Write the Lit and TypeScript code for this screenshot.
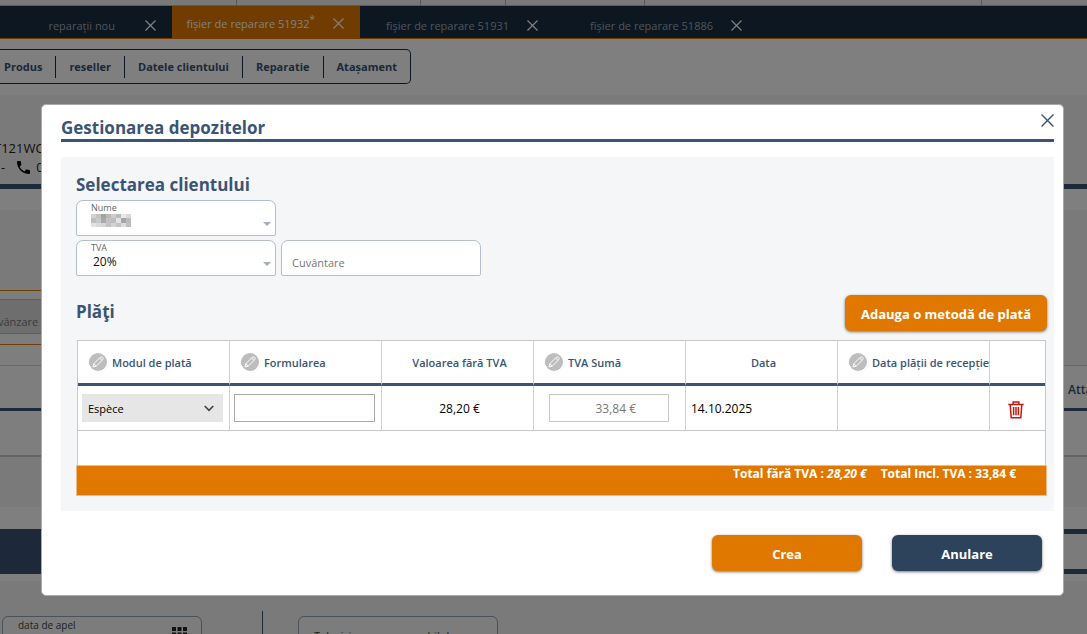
import { LitElement, html, css } from "lit";
import { customElement } from "lit/decorators.js";

const cross = html`<svg class="x" viewBox="0 0 12 12" aria-hidden="true">
  <path d="M0.5 0.5 L11.5 11.5 M11.5 0.5 L0.5 11.5" fill="none" stroke="currentColor" stroke-width="1.3" />
</svg>`;

const pencil = html`<svg class="pencil" viewBox="0 0 18 18" aria-hidden="true">
  <circle cx="9" cy="9" r="9" fill="#bdbdbd" />
  <g fill="none" stroke="#fff" stroke-width="1" stroke-linejoin="round">
    <path d="M4 14 L4.8 10.8 L11.3 4.3 Q12.5 3.3 13.6 4.4 Q14.7 5.5 13.7 6.7 L7.2 13.2 Z" />
    <path d="M4.8 10.8 L7.2 13.2 M10.6 5 L13 7.4" />
  </g>
</svg>`;

const trash = html`<svg class="trash" viewBox="0 0 16 18" aria-hidden="true">
  <g fill="none" stroke="#c0190f" stroke-width="1.5">
    <path d="M0.3 3.4 H15.7 M5.2 3.2 V1 H10.8 V3.2 M2.2 3.6 L3.2 16.8 H12.8 L13.8 3.6" />
    <path d="M5.6 6 V14.2 M8 6 V14.2 M10.4 6 V14.2" />
  </g>
</svg>`;

const chevron = html`<svg class="chevron" viewBox="0 0 10 7" aria-hidden="true">
  <path d="M0.7 1 L5 5.3 L9.3 1" fill="none" stroke="#444" stroke-width="1.7" />
</svg>`;

const caret = html`<svg class="caret" viewBox="0 0 8 4" aria-hidden="true"><path d="M0 0 H8 L4 4 Z" fill="#a3adbb" /></svg>`;

const mosaicShades = [
  "#d2d2d2", "#c2c2c2", "#a2a2a2", "#b8b8b8", "#cccccc", "#bababa", "#e9e9e9", "#d9d9d9",
  "#bebebe", "#c9c9c9", "#a9a9a9", "#c2c2c2", "#bdbdbd", "#e2e2e2", "#a5a5a5", "#bbbbbb",
  "#e2e2e2", "#dadada", "#d6d6d6", "#c3c3c3", "#d4d4d4", "#c4c4c4", "#dcdcdc", "#c0c0c0",
];
const mosaic = html`<div class="mosaic" aria-hidden="true">${mosaicShades.map((c) => html`<i style="background:${c}"></i>`)}</div>`;

@customElement("page-backdrop")
class PageBackdrop extends LitElement {
  static styles = css`
    :host { display: flex; flex-direction: column; height: 100%; overflow: hidden; background: #fff; color: #3a5170; }
    .strip { display: flex; height: 5px; flex: none; background: #f3f3f3; border-bottom: 1px solid #b8b8b8; }
    .strip span { border-right: 1px solid #b0b0b0; box-sizing: border-box; }
    .c1 { width: 237px; }
    .c2 { width: 184px; }
    .c3 { width: 85px; }
    .c4 { width: 139px; }
    .c5 { width: 337px; }
    .tabs { display: flex; flex: none; height: 32px; background: #182e44; border-bottom: 1px solid #e07800; }
    .tab { display: flex; align-items: center; justify-content: flex-end; box-sizing: border-box; padding: 6px 16px 0 0; gap: 18px; font-size: 11px; color: #a0a8b0; white-space: nowrap; }
    .tab button { border: 0; padding: 0; background: none; color: #fff; display: flex; }
    .first { width: 172px; gap: 30px; }
    .active { width: 188px; background: #e07800; color: #fff; padding-top: 2px; }
    .active sup { font-size: 10px; line-height: 0; }
    .open { width: 194px; }
    .last { width: 204px; }
    .x { width: 11px; height: 11px; }
    .nav { display: flex; flex: none; align-self: flex-start; align-items: center; height: 33px; margin: 10px 0 11px; border: 1px solid #1a2e48; border-left: 0; border-radius: 0 5px 5px 0; font-size: 11px; font-weight: 700; }
    .nav a { color: inherit; text-decoration: none; padding: 0 13px; line-height: 22px; border-right: 1px solid #1a2e48; }
    .nav a:first-child { padding-left: 4px; }
    .nav a:last-child { border: 0; }
    .info { flex: none; height: 94px; box-sizing: border-box; padding-top: 44px; background: #f4f4f4; border-bottom: 5px solid #3a5170; font-size: 13px; line-height: 19px; color: #222; }
    .info div { display: flex; align-items: center; gap: 12px; padding-left: 1px; }
    .info .serial { margin-left: -6px; padding: 0; font-weight: 500; }
    .tel { display: flex; align-items: center; gap: 6px; }
    .phone { width: 13px; height: 13px; }
    .gap { flex: none; height: 21px; }
    .cols { display: flex; justify-content: space-between; flex: none; height: 297px; background: #f4f4f4; }
    .left { width: 50px; }
    .right { width: 23px; overflow: hidden; }
    .sale { margin-top: 80px; height: 35px; padding: 8px 0 10px; border: solid #e07800; border-width: 1px 0; background: #fafafa; }
    .sale span { display: block; height: 33px; line-height: 44px; overflow: hidden; background: #dcdcdc; border: solid #b8bec8; border-width: 1px 0; color: #777; white-space: nowrap; font-size: 11px; text-indent: -2px; }
    .blank { height: 20px; background: #fcfcfc; border-bottom: 1px solid #d0d0d0; }
    .row { height: 42px; border-bottom: 3px solid #3a5170; background: #fcfcfc; }
    .rest { height: 44px; border-bottom: 2px solid #c8c8c8; background: #fcfcfc; }
    .right .row { margin-top: 155px; border-top: 1px solid #d0d0d0; line-height: 48px; padding-left: 4px; font-size: 12px; font-weight: 600; }
    .band { display: flex; flex: none; height: 45px; padding: 22px 0 7px; }
    .solid { width: 50%; background: #3a5170; }
    .lined { width: 50%; box-sizing: border-box; border: solid #3a5170; border-width: 5px 0; background: #f7f7f7; }
    .lower { flex: 1; display: flex; align-items: flex-start; background: #f4f4f4; padding: 30px 0 0 2px; }
    .field { width: 200px; height: 50px; box-sizing: border-box; flex: none; border: 1px solid #94a2b6; border-radius: 6px; background: #f8f8f8; display: flex; justify-content: space-between; padding: 0 14px 0 15px; font-size: 10px; line-height: 16px; color: #444; margin-top: 5px; white-space: nowrap; }
    .grid { width: 15px; height: 15px; margin-top: 10px; }
    .rule { flex: none; width: 1px; height: 60px; margin: 0 35px 0 60px; background: #3a5170; }
    .tv { line-height: 38px; font-size: 11px; }
  `;
  render() {
    return html`
      <div class="strip"><span class="c1"></span><span class="c2"></span><span class="c3"></span><span class="c4"></span><span class="c5"></span></div>
      <div class="tabs">
        <div class="tab first"><span>reparații nou</span><button aria-label="Închide">${cross}</button></div>
        <div class="tab active"><span>fișier de reparare 51932<sup>*</sup></span><button aria-label="Închide">${cross}</button></div>
        <div class="tab open"><span>fișier de reparare 51931</span><button aria-label="Închide">${cross}</button></div>
        <div class="tab last"><span>fișier de reparare 51886</span><button aria-label="Închide">${cross}</button></div>
      </div>
      <nav class="nav"><a href="#">Produs</a><a href="#">reseller</a><a href="#">Datele clientului</a><a href="#">Reparatie</a><a href="#">Atașament</a></nav>
      <div class="info">
        <div class="serial">T121WC</div>
        <div>-<span class="tel"><svg class="phone" viewBox="3 3 18 18" aria-hidden="true"><path fill="#000" d="M6.62 10.79c1.44 2.83 3.76 5.14 6.59 6.59l2.2-2.2c.27-.27.67-.36 1.02-.24 1.12.37 2.33.57 3.57.57.55 0 1 .45 1 1V20c0 .55-.45 1-1 1-9.39 0-17-7.61-17-17 0-.55.45-1 1-1h3.5c.55 0 1 .45 1 1 0 1.25.2 2.45.57 3.57.11.35.03.74-.25 1.02l-2.2 2.2z"/></svg>0</span></div>
      </div>
      <div class="gap"></div>
      <div class="cols">
        <div class="left"><div class="sale"><span>vânzare</span></div><div class="blank"></div><div class="row"></div><div class="rest"></div></div>
        <div class="right"><div class="row">Atta</div><div class="rest"></div></div>
      </div>
      <div class="band"><div class="solid"></div><div class="lined"></div></div>
      <div class="lower">
        <div class="field"><span>data de apel</span>
          <svg class="grid" viewBox="0 0 15 15" aria-hidden="true"><path fill="#222" d="M0 0h4v4H0z M5.5 0h4v4h-4z M11 0h4v4h-4z M0 5.5h4v4H0z M5.5 5.5h4v4h-4z M11 5.5h4v4h-4z M0 11h4v4H0z M5.5 11h4v4h-4z M11 11h4v4h-4z"/></svg>
        </div>
        <div class="rule"></div>
        <div class="field"><span class="tv">Televiziunea responsabilul</span></div>
      </div>`;
  }
}

@customElement("deposit-dialog")
class DepositDialog extends LitElement {
  static styles = css`
    :host { display: block; box-sizing: border-box; background: #fff; border: 1px solid #aaa; border-radius: 5px; padding: 4px 9px 24px 19px; color: #3a5475; }
    h2, h3 { margin: 0; font-size: 17px; font-weight: 700; line-height: 24px; }
    header { display: flex; justify-content: space-between; border-bottom: 3px solid #3a5475; height: 30px; }
    header h2 { padding-top: 7px; line-height: 23px; }
    .close { border: 0; padding: 0; background: none; color: #3a5475; width: 13px; height: 13px; margin-top: 5px; }
    .x { display: block; width: 13px; height: 13px; }
    .panel { margin-top: 15px; padding: 16px 7px 15px 15px; background: #f5f6f8; }
    .fields { display: grid; grid-template-columns: 200px 200px; gap: 4px 5px; margin-top: 3px; }
    .field { position: relative; display: flex; flex-direction: column; height: 36px; box-sizing: border-box; border: 1px solid #b4bfce; border-radius: 7px 7px 2px 2px; background: #fff; }
    .field label { font-size: 9px; line-height: 14px; padding-left: 14px; color: #666; }
    .field select { appearance: none; border: 0; padding: 0 0 0 16px; margin: 0; background: none; font: inherit; font-size: 12px; line-height: 14px; height: 14px; color: #111; }
    .field input { border: 0; background: none; padding: 8px 10px 0; font: inherit; font-size: 11px; flex: 1; min-width: 0; }
    .field input::placeholder { color: #777; opacity: 1; }
    .wide { grid-column: 1; }
    .caret { position: absolute; right: 4px; bottom: 9px; width: 8px; height: 4px; }
    .mosaic { position: absolute; left: 14px; top: 13px; width: 40px; height: 13px; display: grid; grid-template-columns: repeat(8, 1fr); }
    .bar { display: flex; justify-content: space-between; margin-top: 19px; height: 36px; }
    .bar h3 { padding-top: 5px; }
    button.action { border: 0; border-radius: 6px; height: 36px; padding: 2px 16px 0; font: inherit; font-size: 13px; font-weight: 700; color: #fff; background: #e07800; box-shadow: 0 1px 3px rgba(0, 0, 0, 0.55); }
    button.wide-action { width: 150px; }
    button.dark { background: #2d425b; }
    .tablebox { margin: 9px 1px 0; border: 1px solid #c8c8c8; border-width: 1px 1px 0; background: #fff; height: 124px; }
    table { width: 100%; table-layout: fixed; border-collapse: separate; border-spacing: 0; font-size: 12px; }
    th, td { box-sizing: border-box; padding: 0; border-right: 1px solid #d0d0d0; overflow: hidden; white-space: nowrap; }
    th:last-child, td:last-child { border-right: 0; }
    th { height: 45px; border-bottom: 3px solid #3a5475; font-size: 11px; font-weight: 600; }
    td { height: 45px; border-bottom: 1px solid #c8c8c8; color: #000; }
    .end { width: 55px; }
    .edit { display: flex; align-items: center; gap: 5px; padding-left: 11px; }
    .pencil { width: 18px; height: 18px; flex: none; }
    .mid { text-align: center; padding-left: 4px; }
    .pick { position: relative; margin: 0 6px 0 4px; }
    .pick select { appearance: none; width: 100%; height: 28px; border: 0; border-radius: 0; padding: 0 6px; background: #e6e6e6; font: inherit; font-size: 11px; color: #000; display: block; }
    .chevron { position: absolute; right: 9px; top: 11px; width: 10px; height: 7px; }
    td input { box-sizing: border-box; display: block; height: 28px; border: 1px solid #aaa; font: inherit; padding: 0; width: 141px; margin-left: 4px; }
    td input.sum { width: 120px; margin-left: 15px; padding-right: 32px; text-align: right; border-color: #c8c8c8; color: #777; background: #fff; }
    .date { padding-left: 5px; }
    .remove { border: 0; padding: 0; background: none; display: block; margin: 3px 0 0 18px; }
    .trash { display: block; width: 16px; height: 18px; }
    .totals { display: flex; justify-content: flex-end; gap: 14px; box-sizing: border-box; height: 31px; padding-right: 30px; border: 1px solid #f0bb80; background: #e07800; color: #fff; font-size: 12px; font-weight: 700; line-height: 16px; }
    footer { display: flex; justify-content: flex-end; gap: 30px; padding: 24px 12px 0 0; }
  `;
  render() {
    return html`
      <header><h2>Gestionarea depozitelor</h2><button class="close" aria-label="Închide">${cross}</button></header>
      <div class="panel">
        <h3>Selectarea clientului</h3>
        <div class="fields">
          <div class="field"><label for="client">Nume</label><select id="client"></select>${mosaic}${caret}</div>
          <div class="field wide"><label for="rate">TVA</label><select id="rate"><option>20%</option></select>${caret}</div>
          <div class="field"><input aria-label="Cuvântare" placeholder="Cuvântare" /></div>
        </div>
        <div class="bar"><h3>Plăţi</h3><button class="action">Adauga o metodă de plată</button></div>
        <div class="tablebox">
          <table>
            <thead><tr>
              <th><div class="edit">${pencil}Modul de plată</div></th>
              <th><div class="edit">${pencil}Formularea</div></th>
              <th><div class="mid">Valoarea fără TVA</div></th>
              <th><div class="edit">${pencil}TVA Sumă</div></th>
              <th><div class="mid">Data</div></th>
              <th><div class="edit">${pencil}Data plății de recepție</div></th>
              <th class="end"></th>
            </tr></thead>
            <tbody><tr>
              <td><div class="pick"><select aria-label="Modul de plată"><option>Espèce</option></select>${chevron}</div></td>
              <td><input aria-label="Formularea" /></td>
              <td class="mid">28,20 €</td>
              <td><input class="sum" aria-label="TVA Sumă" value="33,84 €" disabled /></td>
              <td class="date">14.10.2025</td>
              <td></td>
              <td><button class="remove" aria-label="Șterge">${trash}</button></td>
            </tr></tbody>
          </table>
        </div>
        <div class="totals"><span>Total fără TVA : <em>28,20 €</em></span><span>Total Incl. TVA : 33,84 €</span></div>
      </div>
      <footer><button class="action wide-action">Crea</button><button class="action wide-action dark">Anulare</button></footer>`;
  }
}

@customElement("app-root")
class AppRoot extends LitElement {
  static styles = css`
    :host { display: block; position: relative; height: 100vh; overflow: hidden; font-family: "Open Sans", "Noto Sans", sans-serif; }
    .overlay { position: absolute; inset: 0; padding: 104px 23px 38px 41px; background: rgba(0, 0, 0, 0.5); }
  `;
  render() {
    return html`<page-backdrop></page-backdrop><div class="overlay"><deposit-dialog role="dialog"></deposit-dialog></div>`;
  }
}
